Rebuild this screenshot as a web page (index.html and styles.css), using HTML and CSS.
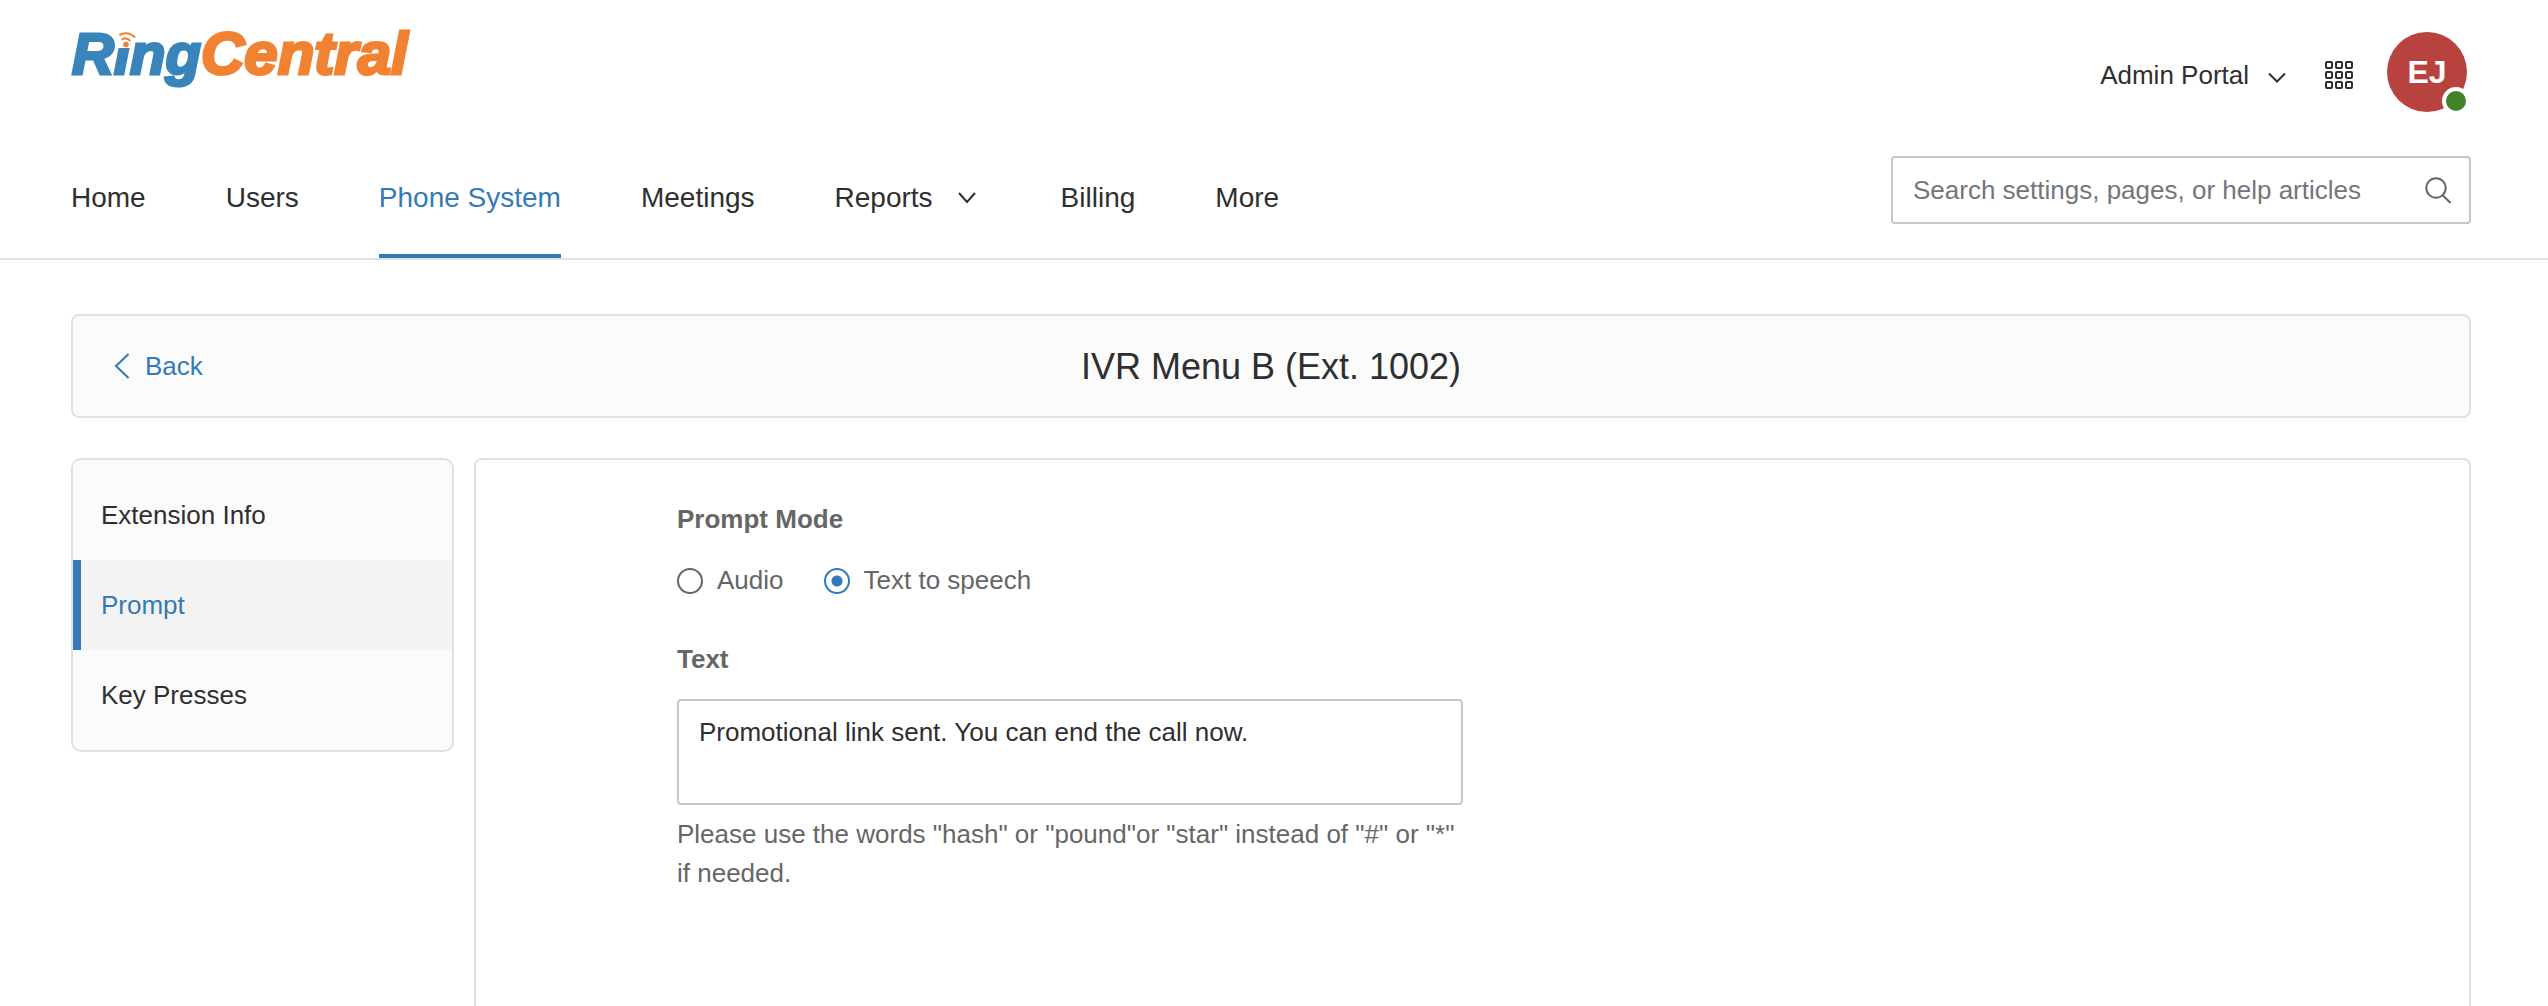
FILE: index.html
```html
<!DOCTYPE html>
<html lang="en">
<head>
<meta charset="utf-8">
<title>RingCentral Admin Portal</title>
<link rel="stylesheet" href="styles.css">
</head>
<body>
<header class="header">
  <div class="topbar">
    <a class="logo" href="#" aria-label="RingCentral">
      <svg class="logo-art" width="380" height="90" viewBox="0 -20 380 90">
        <text class="logo-text" x="1" y="42"><tspan class="logo-ring">Ring</tspan><tspan class="logo-central" x="130">Central</tspan></text>
        <path fill="#fff" d="M49 -8H68L66 8H60L59 16H46L48 -6Z"/>
        <circle cx="55" cy="12.500" r="2.800" fill="#f08232"/>
        <path class="logo-wave" d="M50.500 7.700Q55 4.500 59.300 9M48.300 3Q57-1.500 64 5.500"/>
      </svg>
    </a>
    <div class="actions">
      <button class="portal" type="button">Admin Portal
        <svg class="icon" width="20" height="20" viewBox="0 0 20 20"><path d="M2 8.500L10 16.500L18 8.500"/></svg>
      </button>
      <button class="apps" type="button" aria-label="Apps">
        <svg class="icon" width="28" height="28" viewBox="0 0 28 28">
          <rect x="1" y="1" width="6" height="6" rx="1"/><rect x="11" y="1" width="6" height="6" rx="1"/><rect x="21" y="1" width="6" height="6" rx="1"/>
          <rect x="1" y="11" width="6" height="6" rx="1"/><rect x="11" y="11" width="6" height="6" rx="1"/><rect x="21" y="11" width="6" height="6" rx="1"/>
          <rect x="1" y="21" width="6" height="6" rx="1"/><rect x="11" y="21" width="6" height="6" rx="1"/><rect x="21" y="21" width="6" height="6" rx="1"/>
        </svg>
      </button>
      <button class="avatar" type="button">EJ<span class="presence"></span></button>
    </div>
  </div>
  <div class="navbar">
    <nav class="nav">
      <a class="nav-link" href="#">Home</a>
      <a class="nav-link" href="#">Users</a>
      <a class="nav-link nav-link-active" href="#">Phone System</a>
      <a class="nav-link" href="#">Meetings</a>
      <a class="nav-link" href="#">Reports
        <svg class="icon" width="24" height="20" viewBox="0 0 24 20"><path d="M2 6L10 15L18 6"/></svg>
      </a>
      <a class="nav-link" href="#">Billing</a>
      <a class="nav-link" href="#">More</a>
    </nav>
    <div class="search">
      <input class="search-input" type="text" aria-label="Search" placeholder="Search settings, pages, or help articles">
      <svg class="search-icon" width="28" height="28" viewBox="0 0 28 28"><circle cx="13" cy="12" r="9.700"/><path d="M19.500 19L27.500 27"/></svg>
    </div>
  </div>
</header>
<main class="main">
  <div class="titlebar">
    <a class="back" href="#"><svg class="back-icon" width="16" height="28" viewBox="0 0 16 28"><path d="M15.500 2L3 14L15.500 26"/></svg>Back</a>
    <h1 class="title">IVR Menu B (Ext. 1002)</h1>
  </div>
  <div class="columns">
    <nav class="sidebar">
      <a class="side-link" href="#">Extension Info</a>
      <a class="side-link side-link-active" href="#">Prompt</a>
      <a class="side-link" href="#">Key Presses</a>
    </nav>
    <form class="panel">
      <fieldset class="modes">
        <legend class="heading">Prompt Mode</legend>
        <div class="options">
          <label class="option"><input class="radio" type="radio" name="mode">Audio</label>
          <label class="option"><input class="radio" type="radio" name="mode" checked>Text to speech</label>
        </div>
      </fieldset>
      <label class="heading" for="prompt-text">Text</label>
      <textarea class="prompt-text" id="prompt-text">Promotional link sent. You can end the call now.</textarea>
      <p class="hint">Please use the words "hash" or "pound"or "star" instead of "#" or "*" if needed.</p>
    </form>
  </div>
</main>
</body>
</html>
```
FILE: styles.css
```css
* {
  box-sizing: border-box;
}

body {
  margin: 0;
  min-height: 100vh;
  display: flex;
  flex-direction: column;
  background: #fff;
  color: #2f2f2f;
  font-family: "Liberation Sans", Arial, sans-serif;
  font-size: 26px;
  line-height: 39px;
}

a {
  color: inherit;
  text-decoration: none;
}

button,
input,
textarea {
  font: inherit;
  color: inherit;
}

button {
  padding: 0;
  border: 0;
  background: none;
}

.header {
  padding: 0 77px 0 71px;
  border-bottom: 2px solid #e1e1e1;
}

.topbar {
  display: flex;
  justify-content: space-between;
  height: 134px;
  padding-top: 12px;
}

.logo-art {
  display: block;
}

.logo-text {
  font-weight: 700;
  font-style: italic;
  stroke-width: 3px;
}

.logo-ring {
  font-size: 58px;
  fill: #3984ba;
  stroke: #3984ba;
}

.logo-central {
  font-size: 60px;
  fill: #f08232;
  stroke: #f08232;
}

.logo-wave {
  fill: none;
  stroke: #f08232;
  stroke-width: 2;
}

.actions {
  display: flex;
  align-items: flex-start;
  padding: 20px 4px 0 0;
}

.icon {
  fill: none;
  stroke: #2f2f2f;
  stroke-width: 2;
}

.portal,
.apps {
  display: flex;
  align-items: center;
  height: 86px;
}

.portal {
  gap: 18px;
  margin-right: 38px;
}

.apps {
  margin-right: 34px;
}

.avatar {
  position: relative;
  width: 80px;
  height: 80px;
  border-radius: 50%;
  background: #b8423d;
  color: #fff;
  font-size: 32px;
  font-weight: 700;
}

.presence {
  position: absolute;
  right: -3px;
  bottom: -3px;
  width: 28px;
  height: 28px;
  border: 4px solid #fff;
  border-radius: 50%;
  background: #40832b;
}

.navbar {
  display: flex;
  justify-content: space-between;
  height: 124px;
}

.nav {
  display: flex;
  gap: 80px;
  font-size: 28px;
}

.nav-link {
  display: flex;
  align-items: center;
  gap: 24px;
  padding-top: 2px;
}

.nav-link-active {
  color: #347ab7;
  box-shadow: inset 0 -4px #347ab7;
}

.search {
  display: flex;
  align-items: center;
  width: 580px;
  height: 68px;
  margin-top: 22px;
  padding: 0 18px 0 20px;
  border: 2px solid #c7c7c7;
  border-radius: 4px;
}

.search-input {
  flex: 1;
  min-width: 0;
  padding: 0;
  border: 0;
  outline: 0;
  background: none;
}

.search-input::placeholder {
  color: #73767c;
  opacity: 1;
}

.search-icon {
  fill: none;
  stroke: #666;
  stroke-width: 2;
}

.main {
  flex: 1;
  display: flex;
  flex-direction: column;
  gap: 40px;
  padding: 54px 77px 0 71px;
}

.titlebar {
  display: grid;
  grid-template-columns: 1fr auto 1fr;
  align-items: center;
  height: 104px;
  padding: 0 40px;
  border: 2px solid #e1e1e1;
  border-radius: 8px;
  background: #fbfbfb;
}

.back {
  display: flex;
  align-items: center;
  gap: 16px;
  color: #347ab7;
}

.back-icon {
  fill: none;
  stroke: #347ab7;
  stroke-width: 2;
}

.title {
  margin: 0;
  font-size: 36px;
  font-weight: 400;
}

.columns {
  flex: 1;
  display: flex;
  gap: 20px;
}

.sidebar {
  align-self: flex-start;
  width: 383px;
  padding: 10px 0;
  border: 2px solid #e1e1e1;
  border-radius: 10px;
  background: #fbfbfb;
}

.side-link {
  display: flex;
  align-items: center;
  height: 90px;
  padding-left: 28px;
}

.side-link-active {
  background: #f3f3f3;
  box-shadow: inset 8px 0 #347ab7;
  color: #347ab7;
}

.panel {
  flex: 1;
  padding: 40px 201px;
  border: 2px solid #e1e1e1;
  border-bottom: 0;
  border-radius: 8px 8px 0 0;
  color: #666;
}

.modes {
  margin: 0 0 40px;
  padding: 0;
  border: 0;
}

.heading {
  display: block;
  padding: 0;
  font-weight: 700;
}

.options {
  display: flex;
  gap: 40px;
  padding-top: 22px;
}

.option {
  display: flex;
  align-items: center;
  gap: 14px;
}

.radio {
  appearance: none;
  width: 26px;
  height: 26px;
  margin: 0;
  border: 2px solid #666;
  border-radius: 50%;
}

.radio:checked {
  border-color: #347ab7;
  background: radial-gradient(circle, #347ab7 5px, transparent 6px);
}

.prompt-text {
  display: block;
  width: 786px;
  height: 106px;
  margin: 20px 0 10px;
  padding: 12px 20px;
  border: 2px solid #c7c7c7;
  border-radius: 4px;
  outline: 0;
  resize: none;
  color: #2f2f2f;
}

.hint {
  width: 786px;
  margin: 0;
}
```
